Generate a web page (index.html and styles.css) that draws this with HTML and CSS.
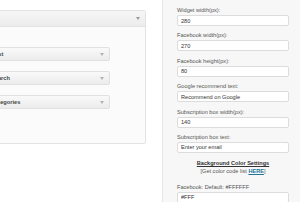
FILE: index.html
```html
<!DOCTYPE html>
<html lang="en">
<head>
  <meta charset="UTF-8">
  <title>Widgets</title>
  <link rel="stylesheet" href="styles.css">
</head>
<body>
  <div class="pagina">
    <div class="sidebar">
      <div class="sidebar-head">
        <span class="flecha"><svg width="4" height="3" viewBox="0 0 4 3"><polygon points="0,0 4,0 2,3" fill="#9a9a9a"/></svg></span>
      </div>
      <div class="widgets">
        <div class="widget">Post<span class="flecha"><svg width="4" height="3" viewBox="0 0 4 3"><polygon points="0,0 4,0 2,3" fill="#b4b4b4"/></svg></span></div>
        <div class="widget">Search<span class="flecha"><svg width="4" height="3" viewBox="0 0 4 3"><polygon points="0,0 4,0 2,3" fill="#b4b4b4"/></svg></span></div>
        <div class="widget">Categories<span class="flecha"><svg width="4" height="3" viewBox="0 0 4 3"><polygon points="0,0 4,0 2,3" fill="#b4b4b4"/></svg></span></div>
      </div>
    </div>

    <div class="ajustes">
      <p class="campo">
        <label>Widget width(px):</label>
        <input type="text" value="280">
      </p>
      <p class="campo">
        <label>Facebook width(px):</label>
        <input type="text" value="270">
      </p>
      <p class="campo">
        <label>Facebook height(px):</label>
        <input type="text" value="80">
      </p>
      <p class="campo">
        <label>Google recommend text:</label>
        <input type="text" value="Recommend on Google">
      </p>
      <p class="campo">
        <label>Subscription box width(px):</label>
        <input type="text" value="140">
      </p>
      <p class="campo">
        <label>Subscription box text:</label>
        <input type="text" value="Enter your email">
      </p>
      <div class="colores">
        <div class="colores-titulo">Background Color Settings</div>
        <div class="colores-link">[Get color code list <a href="#">HERE</a>]</div>
      </div>
      <p class="campo">
        <label>Facebook: Default: #FFFFFF</label>
        <input type="text" value="#FFF">
      </p>
    </div>
  </div>
</body>
</html>
```

FILE: styles.css
```css
body {
  margin: 0;
  background-color: #ffffff;
  font-family: 'Liberation Sans', Arial, sans-serif;
  overflow: hidden;
}

.pagina {
  display: flex;
  align-items: flex-start;
  margin-left: -54px;
}

.sidebar {
  width: 198px;
  height: 132px;
  margin-top: 10px;
  border: 1px solid #e3e3e3;
  border-radius: 2px;
  background-color: #fbfbfb;
  flex-shrink: 0;
}

.sidebar-head {
  height: 15px;
  display: flex;
  justify-content: flex-end;
  align-items: center;
  padding-right: 5px;
  background: linear-gradient(#f6f6f6, #ececec);
  border-bottom: 1px solid #e3e3e3;
}

.flecha {
  display: flex;
}

.widgets {
  display: flex;
  flex-direction: column;
  gap: 10px;
  padding: 20px 35px 0 4px;
}

.widget {
  height: 12px;
  display: flex;
  justify-content: space-between;
  align-items: center;
  padding: 0 5px 0 39px;
  border: 1px solid #e1e1e1;
  border-radius: 2px;
  background: linear-gradient(#f9f9f9, #ececec);
  font-size: 5.7px;
  font-weight: bold;
  color: #464646;
}

.ajustes {
  width: 118px;
  margin-left: 16px;
  margin-top: -4px;
  padding: 10px 6px 0 14px;
  height: 210px;
  background-color: #f7f7f7;
  border-left: 1px solid #e6e6e6;
  border-right: 1px solid #e6e6e6;
  flex-shrink: 0;
}

.campo {
  margin: 0 0 5.4px 0;
}

.campo label {
  display: block;
  height: 8px;
  line-height: 8px;
  margin-bottom: 1px;
  font-size: 5.6px;
  color: #555;
}

.campo input {
  display: block;
  width: 112px;
  height: 11px;
  box-sizing: border-box;
  margin: 0;
  padding: 0 3px;
  border: 1px solid #dcdcdc;
  border-radius: 2px;
  background-color: #ffffff;
  font-family: 'Liberation Sans', Arial, sans-serif;
  font-size: 5.6px;
  color: #333;
}

.colores {
  text-align: center;
  width: 112px;
  margin: 6px 0 7px 0;
  font-size: 5.6px;
  line-height: 8.5px;
  color: #555;
}

.colores-titulo {
  font-weight: bold;
  text-decoration: underline;
  color: #333;
}

.colores-link a {
  color: #21759b;
  font-weight: bold;
}
```
